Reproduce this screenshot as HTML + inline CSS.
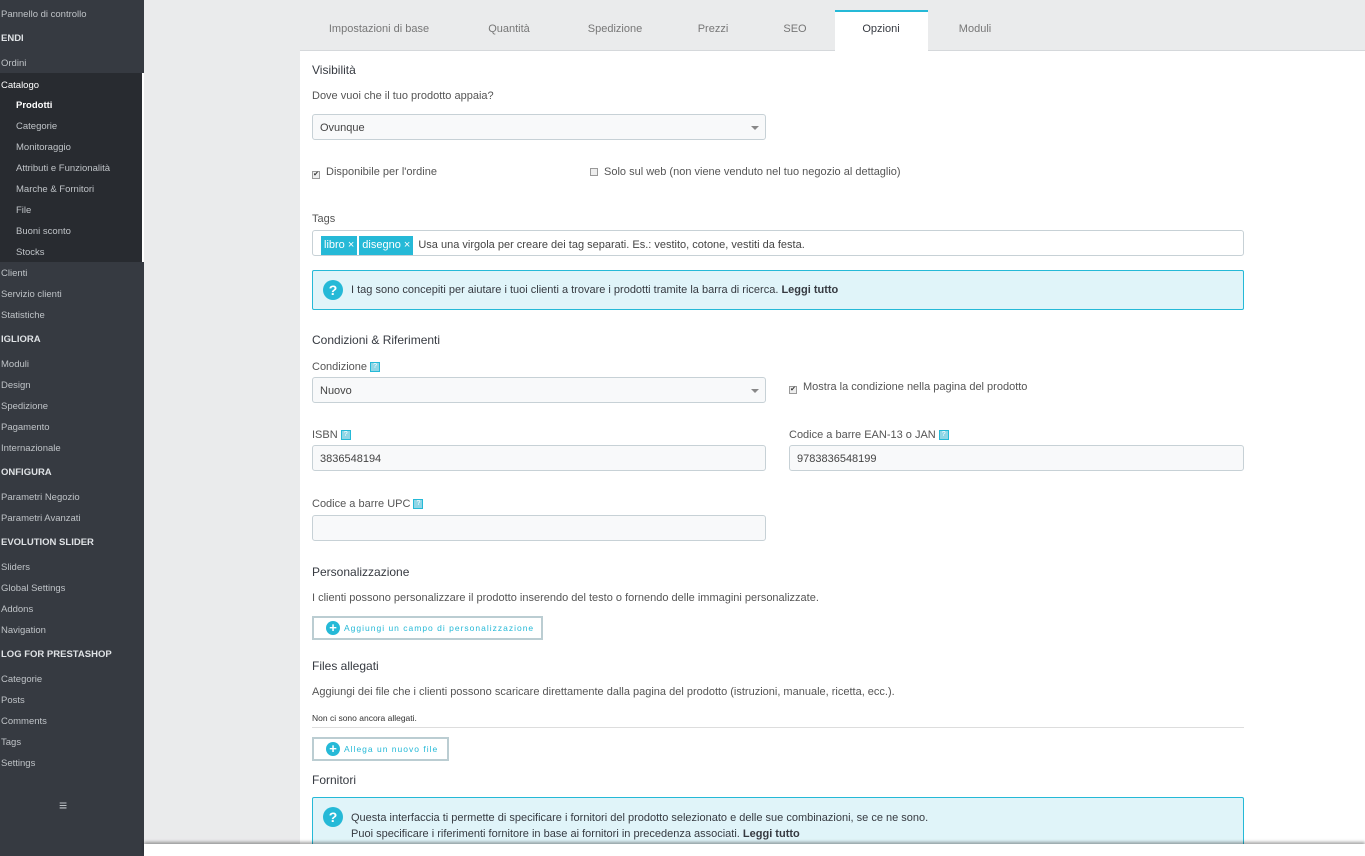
<!DOCTYPE html>
<html><head><meta charset="utf-8"><style>
*{box-sizing:border-box;margin:0;padding:0}
body{width:1365px;height:856px;overflow:hidden;background:#eaebec;font-family:"Liberation Sans",sans-serif;font-size:11px;color:#555;position:relative}
.sb{position:absolute;left:0;top:0;width:144px;height:856px;background:#363a41;color:#bfc3c7;font-size:9.5px}
.sb div{position:absolute;left:1px;white-space:nowrap;margin-top:1px}
.sb .h{font-weight:bold;color:#dfe2e5}
.sb .sub{position:absolute;left:0;top:73px;width:144px;height:189px;background:#282b30;border-right:2px solid #fff;margin:0}
.sb .s{left:16px}
.a{position:absolute;white-space:nowrap;margin-top:2px}
.main{position:absolute;left:300px;top:50px;width:1065px;height:800px;background:#fff;border-top:1px solid #d5d8db}
.tab{position:absolute;top:23px;font-size:11px;color:#777;transform:translateX(-50%)}
.inp{position:absolute;border:1px solid #c7d1d6;border-radius:3px;background:#f8f9fa;height:26px;padding:0 7px;line-height:26px;color:#444}
.caret{position:absolute;right:6px;top:11px;border:4px solid transparent;border-top:4px solid #888;border-bottom:0}
.ttl{position:absolute;font-size:12px;color:#363a41;margin-top:1px}
.info{position:absolute;background:#e0f4f9;border:1px solid #25b9d7;border-radius:2px}
.info .a{margin-top:0}
.q{position:absolute;width:20px;height:20px;border-radius:50%;background:#25b9d7;color:#fff;font-weight:bold;text-align:center;line-height:20px;font-size:14px}
.hlp{display:inline-block;width:10px;height:10px;background:#8fd6e6;vertical-align:middle;margin-left:3px;border:1px solid #25b9d7;font-size:7px;line-height:8px;color:#fff;text-align:center}
.btn{position:absolute;border:2px solid #bbcdd2;height:24px;background:#fff;color:#25b9d7;font-size:8.5px;letter-spacing:1px;padding-left:30px;line-height:20px}
.btn:before{content:"+";position:absolute;left:12px;top:3px;width:14px;height:14px;border-radius:50%;background:#25b9d7;color:#fff;font-size:13px;line-height:14px;text-align:center;font-weight:bold;letter-spacing:0}
.cb{display:inline-block;width:8px;height:8px;border:1px solid #999;background:#eee;margin-right:6px;vertical-align:-1px;font-size:7px;line-height:6px;color:#333;text-align:center}
.tag{display:inline-block;background:#25b9d7;color:#fff;padding:0 3px;height:19px;line-height:19px;margin-right:2px}
</style></head><body>
<div class="sb">
<div style="top:8px">Pannello di controllo</div>
<div class="h" style="top:32px">ENDI</div>
<div style="top:57px">Ordini</div>
<div class="sub"></div>
<div style="top:79px;color:#fff">Catalogo</div>
<div class="s" style="top:99px;color:#fff;font-weight:bold">Prodotti</div>
<div class="s" style="top:120px">Categorie</div>
<div class="s" style="top:141px">Monitoraggio</div>
<div class="s" style="top:162px">Attributi e Funzionalità</div>
<div class="s" style="top:183px">Marche &amp; Fornitori</div>
<div class="s" style="top:204px">File</div>
<div class="s" style="top:225px">Buoni sconto</div>
<div class="s" style="top:246px">Stocks</div>
<div style="top:267px">Clienti</div>
<div style="top:288px">Servizio clienti</div>
<div style="top:309px">Statistiche</div>
<div class="h" style="top:333px">IGLIORA</div>
<div style="top:358px">Moduli</div>
<div style="top:379px">Design</div>
<div style="top:400px">Spedizione</div>
<div style="top:421px">Pagamento</div>
<div style="top:442px">Internazionale</div>
<div class="h" style="top:466px">ONFIGURA</div>
<div style="top:491px">Parametri Negozio</div>
<div style="top:512px">Parametri Avanzati</div>
<div class="h" style="top:536px">EVOLUTION SLIDER</div>
<div style="top:561px">Sliders</div>
<div style="top:582px">Global Settings</div>
<div style="top:603px">Addons</div>
<div style="top:624px">Navigation</div>
<div class="h" style="top:648px">LOG FOR PRESTASHOP</div>
<div style="top:673px">Categorie</div>
<div style="top:694px">Posts</div>
<div style="top:715px">Comments</div>
<div style="top:736px">Tags</div>
<div style="top:757px">Settings</div>
<div style="top:796px;left:59px;font-size:14px">≡</div>
</div>

<div class="main"></div>
<div class="a" style="left:835px;top:10px;width:93px;height:41px;background:#fff;border-top:2px solid #25b9d7;margin:0"></div>
<div class="tab" style="left:379px">Impostazioni di base</div>
<div class="tab" style="left:509px">Quantità</div>
<div class="tab" style="left:615px">Spedizione</div>
<div class="tab" style="left:713px">Prezzi</div>
<div class="tab" style="left:795px">SEO</div>
<div class="tab" style="left:881px;color:#363a41">Opzioni</div>
<div class="tab" style="left:975px">Moduli</div>

<div class="ttl" style="left:312px;top:62px">Visibilità</div>
<div class="a" style="left:312px;top:88px">Dove vuoi che il tuo prodotto appaia?</div>
<div class="inp" style="left:312px;top:114px;width:454px">Ovunque<span class="caret"></span></div>
<div class="a" style="left:312px;top:164px"><span class="cb">✔</span>Disponibile per l'ordine</div>
<div class="a" style="left:590px;top:164px"><span class="cb"></span>Solo sul web (non viene venduto nel tuo negozio al dettaglio)</div>
<div class="a" style="left:312px;top:211px">Tags</div>
<div class="inp" style="left:312px;top:230px;width:932px;background:#fff;padding:5px 8px 0;line-height:19px"><span class="tag">libro ×</span><span class="tag">disegno ×</span> Usa una virgola per creare dei tag separati. Es.: vestito, cotone, vestiti da festa.</div>
<div class="info" style="left:312px;top:270px;width:932px;height:40px"><div class="q" style="left:10px;top:9px">?</div><div class="a" style="left:38px;top:13px;color:#363a41">I tag sono concepiti per aiutare i tuoi clienti a trovare i prodotti tramite la barra di ricerca. <b>Leggi tutto</b></div></div>

<div class="ttl" style="left:312px;top:332px">Condizioni &amp; Riferimenti</div>
<div class="a" style="left:312px;top:359px">Condizione<span class="hlp">?</span></div>
<div class="inp" style="left:312px;top:377px;width:454px">Nuovo<span class="caret"></span></div>
<div class="a" style="left:789px;top:379px"><span class="cb">✔</span>Mostra la condizione nella pagina del prodotto</div>
<div class="a" style="left:312px;top:427px">ISBN<span class="hlp">?</span></div>
<div class="inp" style="left:312px;top:445px;width:454px">3836548194</div>
<div class="a" style="left:789px;top:427px">Codice a barre EAN-13 o JAN<span class="hlp">?</span></div>
<div class="inp" style="left:789px;top:445px;width:455px">9783836548199</div>
<div class="a" style="left:312px;top:496px">Codice a barre UPC<span class="hlp">?</span></div>
<div class="inp" style="left:312px;top:515px;width:454px"></div>

<div class="ttl" style="left:312px;top:564px">Personalizzazione</div>
<div class="a" style="left:312px;top:590px">I clienti possono personalizzare il prodotto inserendo del testo o fornendo delle immagini personalizzate.</div>
<div class="btn" style="left:312px;top:616px;width:231px">Aggiungi un campo di personalizzazione</div>
<div class="ttl" style="left:312px;top:658px">Files allegati</div>
<div class="a" style="left:312px;top:684px">Aggiungi dei file che i clienti possono scaricare direttamente dalla pagina del prodotto (istruzioni, manuale, ricetta, ecc.).</div>
<div class="a" style="left:312px;top:711px;font-size:8.5px;color:#333">Non ci sono ancora allegati.</div>
<div class="a" style="left:312px;top:725px;width:932px;height:1px;background:#ddd"></div>
<div class="btn" style="left:312px;top:737px;width:137px">Allega un nuovo file</div>
<div class="ttl" style="left:312px;top:772px">Fornitori</div>
<div class="info" style="left:312px;top:797px;width:932px;height:50px"><div class="q" style="left:10px;top:9px">?</div><div class="a" style="left:38px;top:12px;color:#363a41;line-height:16px">Questa interfaccia ti permette di specificare i fornitori del prodotto selezionato e delle sue combinazioni, se ce ne sono.<br>Puoi specificare i riferimenti fornitore in base ai fornitori in precedenza associati. <b>Leggi tutto</b></div></div>
<div class="a" style="left:144px;top:844px;width:1221px;height:12px;background:#fff;box-shadow:0 -2px 3px rgba(0,0,0,.35);margin:0"></div>
</body></html>
